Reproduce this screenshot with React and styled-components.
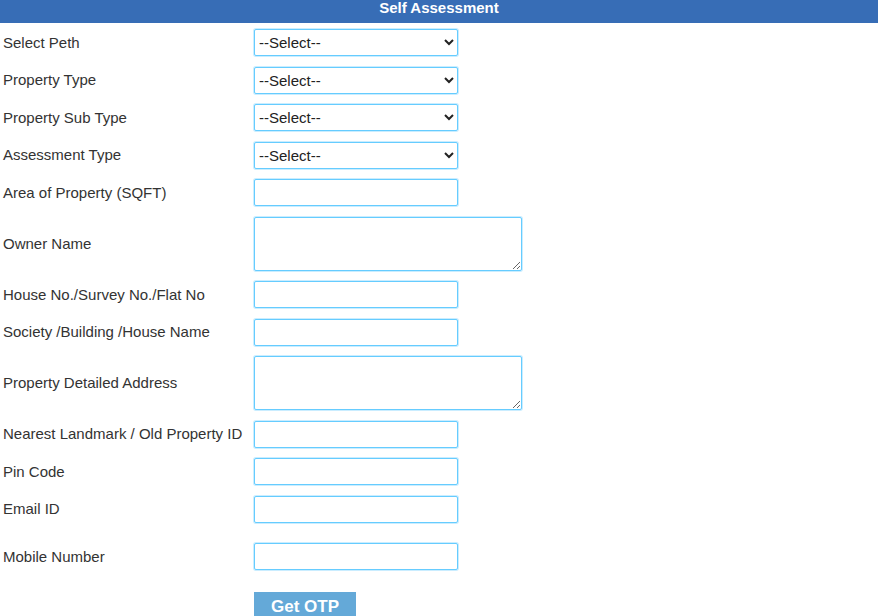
import React from "react";
import styled, { createGlobalStyle } from "styled-components";

const GlobalStyle = createGlobalStyle`
  body {
    margin: 0;
    background: #fff;
    font-family: "Liberation Sans", Arial, sans-serif;
  }
`;

const Page = styled.div`
  width: 878px;
  height: 616px;
  overflow: hidden;
`;

const Header = styled.div`
  height: 23px;
  background: #376db6;
  color: #fff;
  font-weight: 700;
  font-size: 15px;
  line-height: 16px;
  text-align: center;
`;

const Form = styled.form`
  display: flex;
  flex-direction: column;
  padding-top: 1px;
`;

const Row = styled.div`
  display: flex;
  align-items: center;
  padding: 5px 0 5.5px;
  margin-top: ${({ gap }) => gap || 0}px;
`;

const Label = styled.label`
  width: 254px;
  padding-left: 3px;
  padding-bottom: 1px;
  box-sizing: border-box;
  font-size: 15px;
  color: #333;
`;

const fieldBase = `
  box-sizing: border-box;
  width: 204px;
  height: 27px;
  margin: 0;
  border: 1px solid #66ccff;
  border-radius: 2px;
  box-shadow: 0 0 0 1px rgba(102, 204, 255, 0.35);
  background: #fff;
  font-family: "Liberation Sans", Arial, sans-serif;
  font-size: 15px;
  color: #222;
  outline: none;
`;

const Select = styled.select`
  ${fieldBase}
  padding: 0;
`;

const Input = styled.input`
  ${fieldBase}
`;

const TextArea = styled.textarea`
  ${fieldBase}
  width: 268px;
  height: 54px;
  resize: both;
  display: block;
`;

const Button = styled.button`
  width: 102px;
  height: 28px;
  margin-left: 254px;
  border: none;
  background: #64a9d8;
  color: #fff;
  font-family: "Liberation Sans", Arial, sans-serif;
  font-weight: 700;
  font-size: 17px;
  padding: 3px 0 0;
`;

const selects = ["Select Peth", "Property Type", "Property Sub Type", "Assessment Type"];

const fields = [
  { label: "Area of Property (SQFT)" },
  { label: "Owner Name", area: true },
  { label: "House No./Survey No./Flat No" },
  { label: "Society /Building /House Name" },
  { label: "Property Detailed Address", area: true },
  { label: "Nearest Landmark / Old Property ID" },
  { label: "Pin Code" },
  { label: "Email ID" },
  { label: "Mobile Number", gap: 10 },
];

const App = () => {
  return (
    <Page>
      <GlobalStyle />
      <Header>Self Assessment</Header>
      <Form onSubmit={(e) => e.preventDefault()}>
        {selects.map((label) => (
          <Row key={label}>
            <Label>{label}</Label>
            <Select defaultValue="">
              <option value="">--Select--</option>
            </Select>
          </Row>
        ))}
        {fields.map((f) => (
          <Row key={f.label} gap={f.gap}>
            <Label>{f.label}</Label>
            {f.area ? <TextArea /> : <Input type="text" />}
          </Row>
        ))}
        <Row gap={11}>
          <Button type="submit">Get OTP</Button>
        </Row>
      </Form>
    </Page>
  );
};

export default App;
